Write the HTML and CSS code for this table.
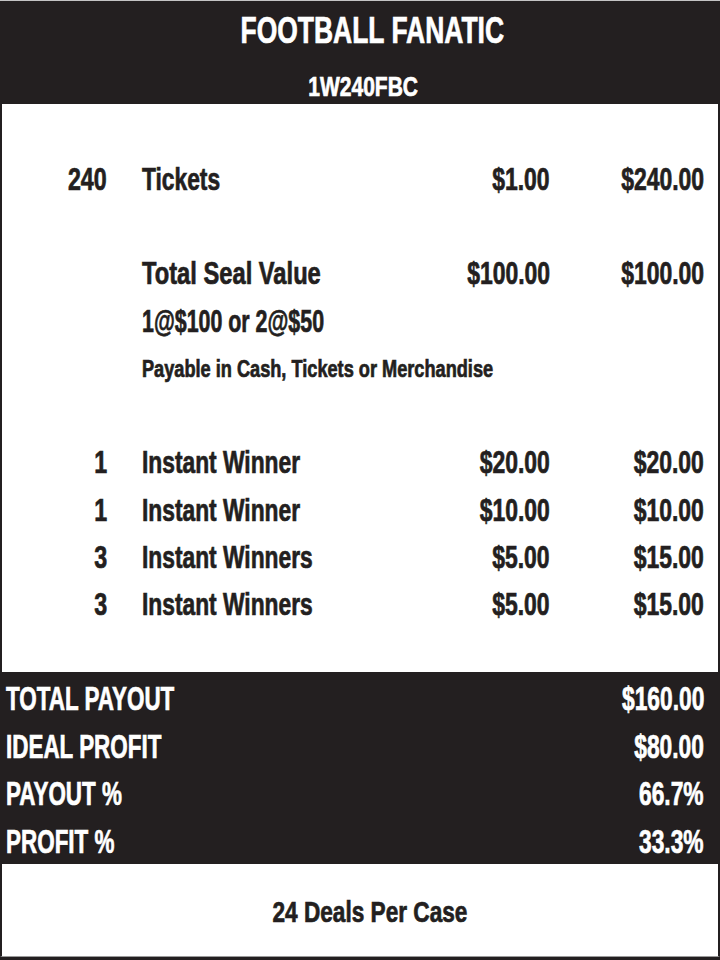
FILE: index.html
```html
<!DOCTYPE html>
<html lang="en">
<head>
<meta charset="utf-8">
<title>Football Fanatic 1W240FBC</title>
<link rel="stylesheet" href="styles.css">
</head>
<body>
<div class="sheet">
  <header class="head">
    <h1 class="title"><span class="t">FOOTBALL FANATIC</span></h1>
    <div class="code"><span class="t">1W240FBC</span></div>
  </header>

  <section class="table">
    <div class="row">
      <span class="qty"><span class="t">240</span></span>
      <span class="desc"><span class="t">Tickets</span></span>
      <span class="price"><span class="t">$1.00</span></span>
      <span class="total"><span class="t">$240.00</span></span>
    </div>
    <div class="row spacer"></div>
    <div class="row">
      <span class="qty"></span>
      <span class="desc seal"><span class="t">Total Seal Value</span></span>
      <span class="price"><span class="t">$100.00</span></span>
      <span class="total"><span class="t">$100.00</span></span>
    </div>
    <div class="row">
      <span class="qty"></span>
      <span class="desc wide at"><span class="t">1@$100 or 2@$50</span></span>
    </div>
    <div class="row">
      <span class="qty"></span>
      <span class="desc wide note"><span class="t">Payable in Cash, Tickets or Merchandise</span></span>
    </div>
    <div class="row spacer"></div>
    <div class="row">
      <span class="qty"><span class="t">1</span></span>
      <span class="desc"><span class="t">Instant Winner</span></span>
      <span class="price"><span class="t">$20.00</span></span>
      <span class="total"><span class="t">$20.00</span></span>
    </div>
    <div class="row">
      <span class="qty"><span class="t">1</span></span>
      <span class="desc"><span class="t">Instant Winner</span></span>
      <span class="price"><span class="t">$10.00</span></span>
      <span class="total"><span class="t">$10.00</span></span>
    </div>
    <div class="row">
      <span class="qty"><span class="t">3</span></span>
      <span class="desc"><span class="t">Instant Winners</span></span>
      <span class="price"><span class="t">$5.00</span></span>
      <span class="total"><span class="t">$15.00</span></span>
    </div>
    <div class="row">
      <span class="qty"><span class="t">3</span></span>
      <span class="desc"><span class="t">Instant Winners</span></span>
      <span class="price"><span class="t">$5.00</span></span>
      <span class="total"><span class="t">$15.00</span></span>
    </div>
  </section>

  <section class="summary">
    <div class="sum-row"><span class="label"><span class="t">TOTAL PAYOUT</span></span><span class="value"><span class="t">$160.00</span></span></div>
    <div class="sum-row"><span class="label"><span class="t">IDEAL PROFIT</span></span><span class="value"><span class="t">$80.00</span></span></div>
    <div class="sum-row"><span class="label"><span class="t">PAYOUT %</span></span><span class="value"><span class="t">66.7%</span></span></div>
    <div class="sum-row"><span class="label"><span class="t">PROFIT %</span></span><span class="value"><span class="t">33.3%</span></span></div>
  </section>

  <footer class="foot"><span class="t">24 Deals Per Case</span></footer>
</div>
</body>
</html>
```
FILE: styles.css
```css
* { box-sizing: border-box; }

html, body {
  margin: 0;
  padding: 0;
  background: #231f20;
}

body {
  width: 720px;
  height: 960px;
  overflow: hidden;
  font-family: "Liberation Sans", Arial, sans-serif;
  font-weight: 700;
  color: #231f20;
}

/* condensed look: horizontally squeezed text */
.t {
  display: inline-block;
  white-space: nowrap;
  transform: scaleX(var(--sx, 0.75));
  transform-origin: var(--ox, left) center;
  -webkit-text-stroke: 0.7px currentColor;
}

.sheet {
  width: 720px;
  border-top: 1px solid #c4c4c4;
  display: flex;
  flex-direction: column;
}

/* header */
.head {
  background: #231f20;
  color: #ffffff;
  height: 103px;
  padding-top: 8px;
  display: flex;
  flex-direction: column;
  align-items: center;
}

.title {
  margin: 0;
  font-size: 37px;
  line-height: 44px;
  font-weight: 700;
  --sx: 0.715;
  --ox: center;
  padding-left: 24px;
}

.code {
  margin-top: 18px;
  font-size: 28px;
  line-height: 32px;
  --sx: 0.75;
  --ox: center;
  padding-left: 6px;
}

/* white table */
.table {
  background: #ffffff;
  border-left: 2px solid #231f20;
  border-right: 2px solid #231f20;
  padding: 52px 14px 43px 0;
  display: flex;
  flex-direction: column;
}

.row {
  display: grid;
  grid-template-columns: 105px 1fr 150px 154px;
  height: 47.3px;
  align-items: center;
  font-size: 31px;
  line-height: 36px;
  white-space: nowrap;
}

.qty { text-align: right; --ox: right; }
.desc { padding-left: 35px; --sx: 0.735; }
.seal { --sx: 0.765; }
.price, .total { text-align: right; --ox: right; --sx: 0.74; }
.wide { grid-column: 2 / 5; }
.at { --sx: 0.69; }
.note { font-size: 23px; --sx: 0.79; }

/* summary */
.summary {
  background: #231f20;
  color: #ffffff;
  height: 192px;
  padding: 3px 16px 0 6px;
  display: flex;
  flex-direction: column;
  overflow: hidden;
}

.sum-row {
  display: flex;
  justify-content: space-between;
  align-items: center;
  height: 47.7px;
  flex: none;
  font-size: 33px;
  line-height: 38px;
}

.label { --sx: 0.68; }
.value { --sx: 0.69; --ox: right; }

/* footer */
.foot {
  background: #ffffff;
  border-left: 2px solid #231f20;
  border-right: 2px solid #231f20;
  border-bottom: 1px solid #9a9a9a;
  height: 93px;
  padding-top: 4px;
  padding-left: 20px;
  line-height: 88px;
  text-align: center;
  font-size: 29px;
  --sx: 0.78;
  --ox: center;
}
```
